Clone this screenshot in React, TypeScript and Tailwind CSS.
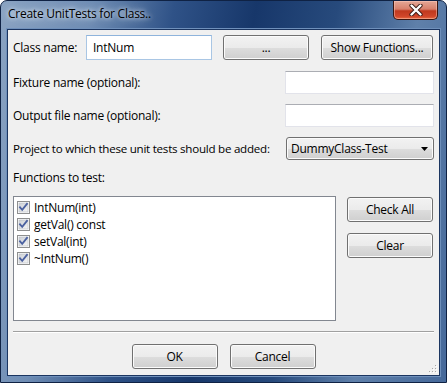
import React from 'react';

const font = { fontFamily: '"Open Sans", "Noto Sans", Arial, sans-serif' };

const Button: React.FC<{ label: string; className?: string }> = ({ label, className = '' }) => (
    <button
        className={`h-[25px] rounded-[3px] border border-[#707070] bg-[linear-gradient(#f2f2f2_0%,#ebebeb_50%,#dddddd_51%,#cfcfcf_100%)] shadow-[inset_0_0_0_1px_#fbfbfb] text-[12px] text-black leading-none ${className}`}
    >
        {label}
    </button>
);

const TextBox: React.FC<{ value?: string; className?: string; focused?: boolean }> = ({ value = '', className = '', focused }) => (
    <div
        className={`h-[23px] bg-white border flex items-center px-[6px] text-[12px] ${focused ? 'border-[#a9c6e4] border-t-[#8fb4dc]' : 'border-[#e2e3ea] border-t-[#abadb3]'} ${className}`}
    >
        {value}
    </div>
);

const CheckBox: React.FC = () => (
    <svg width="13" height="13" viewBox="0 0 13 13" className="shrink-0">
        <defs>
            <linearGradient id="cbFill" x1="0" y1="0" x2="1" y2="1">
                <stop offset="0%" stopColor="#cbcfd5" />
                <stop offset="100%" stopColor="#f6f6f6" />
            </linearGradient>
        </defs>
        <rect x="0.5" y="0.5" width="12" height="12" fill="#fff" stroke="#8e8f8f" />
        <rect x="2" y="2" width="9" height="9" fill="url(#cbFill)" stroke="#b7bcc4" strokeWidth="0.6" />
        <path d="M3 6.3 L5.2 8.8 L10 2.8" fill="none" stroke="#4b61a0" strokeWidth="1.8" strokeLinecap="square" />
    </svg>
);

const functions = ['IntNum(int)', 'getVal() const', 'setVal(int)', '~IntNum()'];

export default function App() {
    return (
        <div
            className="w-[447px] h-[383px] overflow-hidden rounded-t-[7px] border border-[#0f2244] bg-[linear-gradient(100deg,#8aa3c2_0%,#6f8db4_18%,#2f5287_34%,#17376a_50%,#274a7c_66%,#5f80aa_82%,#46699a_100%)] text-black tracking-[-0.25px] whitespace-nowrap"
            style={font}
        >
            {/* Title bar */}
            <div className="h-[28px] flex items-start">
                <div className="pl-[7px] pt-[5px] text-[12px] leading-[16px] [text-shadow:0_0_8px_#dfe9f5,0_0_4px_#e9f0f8]">
                    Create UnitTests for Class..
                </div>
                <div className="ml-auto mr-[8px] w-[45px] h-[19px] rounded-b-[5px] border border-t-0 border-[#3b1610] bg-[linear-gradient(#e4a796_0%,#d7806c_45%,#c0391e_55%,#d0462a_85%,#e86a3e_100%)] shadow-[inset_0_0_0_1px_rgba(255,210,200,0.45)] flex items-center justify-center">
                    <svg width="14" height="12" viewBox="0 0 14 12">
                        <path d="M2.5 1.5 L11.5 10.5 M11.5 1.5 L2.5 10.5" stroke="#3a1a14" strokeWidth="4.2" strokeLinecap="round" />
                        <path d="M2.5 1.5 L11.5 10.5 M11.5 1.5 L2.5 10.5" stroke="#ffffff" strokeWidth="2.4" strokeLinecap="round" />
                    </svg>
                </div>
            </div>

            {/* Client area */}
            <div className="relative mx-[6px] h-[347px] border border-[#1b3560] bg-[#f0f0f0] shadow-[0_0_0_1px_#6f90bb] pl-[5px] pr-[5px] pt-[5px] text-[12px] flex flex-col">
                <div className="h-[25px] flex items-center">
                    <span className="w-[73px]">Class name:</span>
                    <TextBox value="IntNum" focused className="w-[126px] h-[25px]" />
                    <Button label="..." className="ml-[11px] w-[86px]" />
                    <Button label="Show Functions..." className="ml-[12px] w-[112px]" />
                </div>

                <div className="mt-[11px] h-[23px] flex items-center justify-between">
                    <span>Fixture name (optional):</span>
                    <TextBox className="w-[149px]" />
                </div>

                <div className="mt-[10px] h-[23px] flex items-center justify-between">
                    <span>Output file name (optional):</span>
                    <TextBox className="w-[149px]" />
                </div>

                <div className="mt-[10px] h-[23px] flex items-center justify-between">
                    <span className="text-[11.6px]">Project to which these unit tests should be added:</span>
                    <div className="w-[148px] h-[23px] shrink-0 rounded-[3px] border border-[#707070] bg-[linear-gradient(#f2f2f2_0%,#ebebeb_50%,#dddddd_51%,#cfcfcf_100%)] shadow-[inset_0_0_0_1px_#fbfbfb] flex items-center pl-[4px] pr-[5px]">
                        <span>DummyClass-Test</span>
                        <svg width="7" height="4" viewBox="0 0 7 4" className="ml-auto">
                            <path d="M0 0 H7 L3.5 4 Z" fill="#000" />
                        </svg>
                    </div>
                </div>

                <div className="mt-[10px] h-[16px] leading-[16px]">Functions to test:</div>

                <div className="mt-[10px] flex">
                    <div className="w-[323px] h-[125px] bg-white border border-[#828790] pl-[3px] pt-[2px]">
                        {functions.map(f => (
                            <div key={f} className="h-[17px] flex items-center gap-[4px]">
                                <CheckBox />
                                <span className="leading-none">{f}</span>
                            </div>
                        ))}
                    </div>
                    <div className="ml-[11px] w-[86px] flex flex-col">
                        <Button label="Check All" className="mt-[1px] w-full" />
                        <Button label="Clear" className="mt-[11px] w-full" />
                    </div>
                </div>

                <div className="mt-[10px] border-t border-[#a0a0a0] border-b border-b-white" />

                <div className="mt-[11px] flex justify-center gap-[12px]">
                    <Button label="OK" className="w-[86px] h-[24px]" />
                    <Button label="Cancel" className="w-[86px] h-[24px]" />
                </div>

                {/* size grip */}
                <svg width="10" height="10" viewBox="0 0 10 10" className="absolute right-[2px] bottom-[2px]">
                    {[[8, 2], [8, 5], [8, 8], [5, 5], [5, 8], [2, 8]].map(([x, y]) => (
                        <g key={`${x}-${y}`}>
                            <rect x={x + 1} y={y + 1} width="1" height="1" fill="#fff" />
                            <rect x={x} y={y} width="1" height="1" fill="#a7a7a7" />
                        </g>
                    ))}
                </svg>
            </div>
        </div>
    );
}
